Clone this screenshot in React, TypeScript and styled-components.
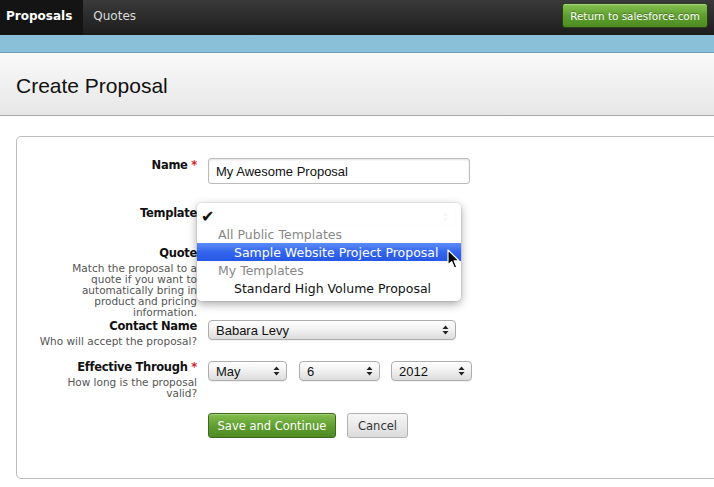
import React from 'react';
import styled, { createGlobalStyle } from 'styled-components';

const GlobalStyle = createGlobalStyle`
  html, body {
    margin: 0;
    padding: 0;
    background: #fff;
    overflow: hidden;
  }
  body {
    font-family: "DejaVu Sans", Verdana, sans-serif;
    width: 714px;
    height: 487px;
  }
`;

const UI = `"DejaVu Sans", Verdana, sans-serif`;
const FIELD = `"Liberation Sans", Arial, sans-serif`;

const SelectArrows: React.FC = () => (
  <svg width="7" height="10" viewBox="0 0 7 10">
    <path d="M3.5 0.5 L6.5 4 L0.5 4 Z" fill="#222" />
    <path d="M3.5 9.5 L6.5 6 L0.5 6 Z" fill="#222" />
  </svg>
);

const Cursor: React.FC = () => (
  <svg width="14" height="21" viewBox="0 0 14 21">
    <path
      d="M1 1 L1 16 L4.6 12.6 L7.4 19 L9.8 18 L7.1 11.8 L12 11.8 Z"
      fill="#000"
      stroke="#fff"
      strokeWidth="1.2"
      strokeLinejoin="round"
    />
  </svg>
);

const App: React.FC = () => {
  return (
    <Page>
      <GlobalStyle />
      <TopNav>
        <Tabs>
          <Tab active>Proposals</Tab>
          <Tab>Quotes</Tab>
        </Tabs>
        <ReturnButton>Return to salesforce.com</ReturnButton>
      </TopNav>
      <BlueBand />
      <Header>
        <Title>Create Proposal</Title>
      </Header>

      <Content>
        <Panel>
          <Row>
            <LabelCell>
              <LabelText>
                Name <Req>*</Req>
              </LabelText>
            </LabelCell>
            <FieldCell>
              <TextInput>My Awesome Proposal</TextInput>
            </FieldCell>
          </Row>

          <Row top={21}>
            <LabelCell>
              <LabelText>Template</LabelText>
            </LabelCell>
            <FieldCell>
              <Select width={248}>
                <span />
                <SelectArrows />
              </Select>
              <Popup>
                <CheckRow>✔</CheckRow>
                <PopGroup>All Public Templates</PopGroup>
                <PopItem selected>Sample Website Project Proposal</PopItem>
                <PopGroup>My Templates</PopGroup>
                <PopItem>Standard High Volume Proposal</PopItem>
                <CursorWrap>
                  <Cursor />
                </CursorWrap>
              </Popup>
            </FieldCell>
          </Row>

          <Row top={18}>
            <LabelCell>
              <LabelText>Quote</LabelText>
              <Hint>
                Match the proposal to a<br />
                quote if you want to<br />
                automatically bring in<br />
                product and pricing<br />
                information.
              </Hint>
            </LabelCell>
            <FieldCell>
              <Select width={248}>
                <span />
                <SelectArrows />
              </Select>
            </FieldCell>
          </Row>

          <Row>
            <LabelCell>
              <LabelText>Contact Name</LabelText>
              <Hint>Who will accept the proposal?</Hint>
            </LabelCell>
            <FieldCell>
              <Select width={248}>
                <span>Babara Levy</span>
                <SelectArrows />
              </Select>
            </FieldCell>
          </Row>

          <Row top={12}>
            <LabelCell>
              <LabelText>
                Effective Through <Req>*</Req>
              </LabelText>
              <Hint>
                How long is the proposal
                <br />
                valid?
              </Hint>
            </LabelCell>
            <FieldCell>
              <DateGroup>
                <Select width={79}>
                  <span>May</span>
                  <SelectArrows />
                </Select>
                <Select width={81}>
                  <span>6</span>
                  <SelectArrows />
                </Select>
                <Select width={81}>
                  <span>2012</span>
                  <SelectArrows />
                </Select>
              </DateGroup>
            </FieldCell>
          </Row>

          <Actions>
            <PrimaryButton>Save and Continue</PrimaryButton>
            <SecondaryButton>Cancel</SecondaryButton>
          </Actions>
        </Panel>
      </Content>
    </Page>
  );
};

const Page = styled.div`
  width: 714px;
  height: 487px;
  overflow: hidden;
  background: #fff;
`;

const TopNav = styled.div`
  height: 35px;
  display: flex;
  align-items: flex-start;
  justify-content: space-between;
  background: linear-gradient(#3a3a3a, #1c1c1c);
`;

const Tabs = styled.div`
  display: flex;
  height: 35px;
`;

const Tab = styled.div<{ active?: boolean }>`
  height: 35px;
  display: flex;
  align-items: center;
  padding: 0 ${(p) => (p.active ? '11px' : '10px')} 3px ${(p) => (p.active ? '6px' : '10px')};
  box-sizing: border-box;
  background: ${(p) => (p.active ? '#141414' : 'transparent')};
  color: ${(p) => (p.active ? '#fff' : '#ddd')};
  font-family: ${UI};
  font-weight: ${(p) => (p.active ? 'bold' : 'normal')};
  font-size: 12px;
`;

const ReturnButton = styled.button`
  margin: 3px 6px 0 0;
  width: 146px;
  height: 25px;
  border: 1px solid #2a3f18;
  border-radius: 3px;
  background: linear-gradient(#86c252, #5c9c2c 55%, #4e8c22);
  box-shadow: inset 0 1px 0 rgba(255, 255, 255, 0.3);
  color: #fff;
  font-family: ${UI};
  font-size: 10.4px;
  padding: 0;
  text-shadow: 0 -1px 0 rgba(0, 0, 0, 0.3);
`;

const BlueBand = styled.div`
  height: 17px;
  background: #8bc0d9;
  border-bottom: 1px solid #6d9fb8;
`;

const Header = styled.div`
  height: 59px;
  box-sizing: content-box;
  display: flex;
  align-items: center;
  padding: 3px 16px 0;
  background: linear-gradient(#f9f9f9, #e7e7e7);
  border-bottom: 1px solid #a8a8a8;
`;

const Title = styled.h1`
  margin: 0;
  font-family: ${FIELD};
  font-weight: normal;
  font-size: 21px;
  color: #111;
`;

const Content = styled.div`
  padding: 20px 0 0 16px;
`;

const Panel = styled.div`
  width: 740px;
  box-sizing: border-box;
  border: 1px solid #bdbdbd;
  border-radius: 5px;
  padding: 20px 0 40px 0;
  display: flex;
  flex-direction: column;
`;

const Row = styled.div<{ top?: number }>`
  display: grid;
  grid-template-columns: 180px 1fr;
  column-gap: 11px;
  margin-top: ${(p) => p.top ?? 0}px;
`;

const LabelCell = styled.div`
  text-align: right;
  white-space: nowrap;
  display: flex;
  flex-direction: column;
  align-items: flex-end;
`;

const LabelText = styled.div`
  font-family: ${UI};
  font-weight: bold;
  font-size: 11.5px;
  letter-spacing: -0.3px;
  line-height: 16px;
  color: #111;
`;

const Req = styled.span`
  color: #d0232a;
`;

const Hint = styled.div`
  margin-top: 2px;
  font-family: ${UI};
  font-size: 10.5px;
  line-height: 11px;
  color: #555;
`;

const FieldCell = styled.div`
  position: relative;
  padding-top: 1px;
`;

const TextInput = styled.div`
  width: 262px;
  height: 26px;
  box-sizing: border-box;
  display: flex;
  align-items: center;
  padding: 0 7px;
  border: 1px solid #bcbcbc;
  border-radius: 3px;
  box-shadow: inset 0 1px 2px rgba(0, 0, 0, 0.12);
  font-family: ${FIELD};
  font-size: 13px;
  color: #111;
  background: #fff;
`;

const Select = styled.div<{ width: number }>`
  width: ${(p) => p.width}px;
  height: 20px;
  box-sizing: border-box;
  margin-top: 1px;
  display: flex;
  align-items: center;
  justify-content: space-between;
  padding: 0 6px 0 7px;
  border: 1px solid #adadad;
  border-radius: 4px;
  background: linear-gradient(#ffffff, #f0f0f0 50%, #dcdcdc);
  box-shadow: 0 1px 0 rgba(0, 0, 0, 0.05);
  font-family: ${FIELD};
  font-size: 13px;
  color: #111;
`;

const DateGroup = styled.div`
  display: flex;
  gap: 11px;
  & > :first-child {
    margin-right: 1px;
  }
`;

const Popup = styled.div`
  position: absolute;
  left: -11px;
  top: -2px;
  width: 264px;
  padding: 4px 0;
  background: rgba(255, 255, 255, 0.97);
  border-radius: 5px;
  box-shadow: 0 3px 10px rgba(0, 0, 0, 0.35), 0 0 0 1px rgba(0, 0, 0, 0.06);
  z-index: 10;
`;

const PopItem = styled.div<{ selected?: boolean }>`
  height: 18px;
  display: flex;
  align-items: center;
  padding-left: 37px;
  font-family: ${UI};
  font-size: 12.5px;
  color: ${(p) => (p.selected ? '#fff' : '#111')};
  background: ${(p) =>
    p.selected ? 'linear-gradient(#5c8cf6, #3466ee 50%, #2757e6)' : 'transparent'};
  white-space: nowrap;
`;

const PopGroup = styled.div`
  height: 18px;
  display: flex;
  align-items: center;
  padding-left: 21px;
  font-family: ${UI};
  font-size: 12.5px;
  color: #888;
`;

const CheckRow = styled.div`
  height: 18px;
  display: flex;
  align-items: center;
  padding: 2px 0 0 4px;
  box-sizing: border-box;
  font-family: ${UI};
  font-size: 16px;
  line-height: 1;
  color: #111;
`;

const CursorWrap = styled.div`
  position: absolute;
  left: 250px;
  top: 46px;
`;

const Actions = styled.div`
  margin: 14px 0 0 191px;
  display: flex;
  gap: 11px;
`;

const PrimaryButton = styled.button`
  width: 128px;
  height: 25px;
  padding: 0;
  border: 1px solid #3c6a1c;
  border-radius: 3px;
  background: linear-gradient(#84bf4f, #5f9d30 55%, #4e8b22);
  box-shadow: inset 0 1px 0 rgba(255, 255, 255, 0.25);
  color: #fff;
  font-family: ${UI};
  font-size: 11.5px;
`;

const SecondaryButton = styled.button`
  width: 61px;
  height: 25px;
  padding: 0;
  border: 1px solid #b3b3b3;
  border-radius: 3px;
  background: linear-gradient(#f6f6f6, #dcdcdc);
  color: #333;
  font-family: ${UI};
  font-size: 11.5px;
`;

export default App;
